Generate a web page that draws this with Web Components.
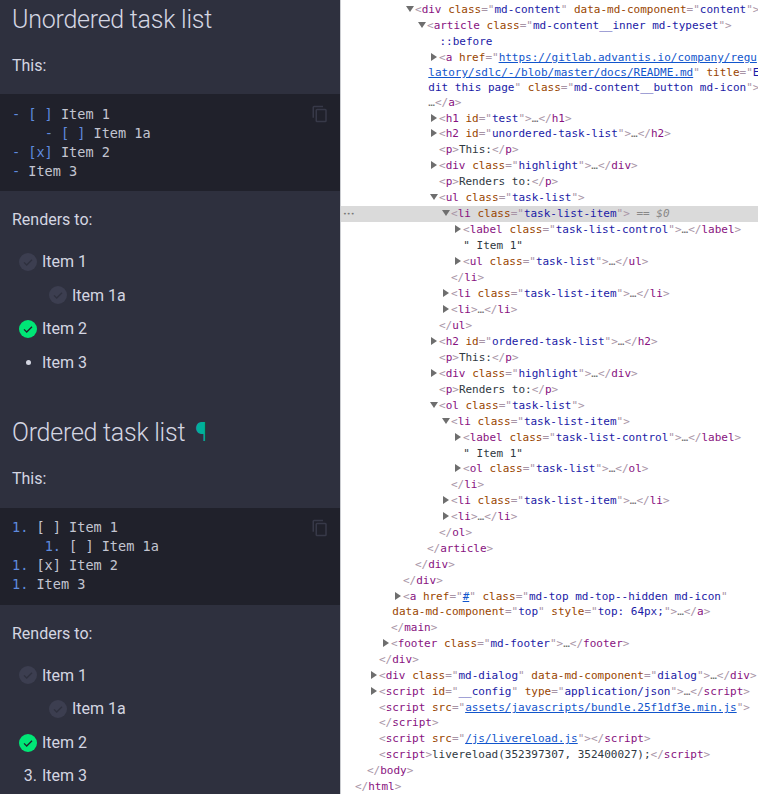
<!DOCTYPE html>
<html><head><meta charset="utf-8"><title>Task list</title>
<style>html,body{margin:0;padding:0;height:794px;overflow:hidden;background:#fff}</style>
</head><body>
<split-page>
<doc-pane slot="left">
<doc-h2>Unordered task list</doc-h2>
<doc-p>This:</doc-p>
<code-block>
<code-line><c-m>-</c-m> <c-m>[ ]</c-m> Item 1</code-line>
<code-line>    <c-m>-</c-m> <c-m>[ ]</c-m> Item 1a</code-line>
<code-line><c-m>-</c-m> <c-m>[x]</c-m> Item 2</code-line>
<code-line><c-m>-</c-m> Item 3</code-line>
</code-block>
<doc-p>Renders to:</doc-p>
<task-list>
<task-item kind="open">Item 1</task-item>
<task-item kind="open" nested>Item 1a</task-item>
<task-item kind="done">Item 2</task-item>
<task-item kind="bullet">Item 3</task-item>
</task-list>
<doc-h2 link>Ordered task list</doc-h2>
<doc-p>This:</doc-p>
<code-block>
<code-line><c-m>1.</c-m> [ ] Item 1</code-line>
<code-line>    <c-m>1.</c-m> [ ] Item 1a</code-line>
<code-line><c-m>1.</c-m> [x] Item 2</code-line>
<code-line><c-m>1.</c-m> Item 3</code-line>
</code-block>
<doc-p>Renders to:</doc-p>
<task-list>
<task-item kind="open">Item 1</task-item>
<task-item kind="open" nested>Item 1a</task-item>
<task-item kind="done">Item 2</task-item>
<task-item kind="num" n="3.">Item 3</task-item>
</task-list>
</doc-pane>
<dev-tree slot="right">
<dt-row l="5" t="d"><d-p>&lt;</d-p><d-n>div</d-n> <d-a>class</d-a><d-p>="</d-p><d-v>md-content</d-v><d-p>"</d-p> <d-a>data-md-component</d-a><d-p>="</d-p><d-v>content</d-v><d-p>"&gt;</d-p></dt-row>
<dt-row l="6" t="d"><d-p>&lt;</d-p><d-n>article</d-n> <d-a>class</d-a><d-p>="</d-p><d-v>md-content__inner md-typeset</d-v><d-p>"&gt;</d-p></dt-row>
<dt-row l="7" off="0.5"><d-v>::before</d-v></dt-row>
<dt-row l="7" t="r" h="15"><d-p>&lt;</d-p><d-n>a</d-n> <d-a>href</d-a><d-p>="</d-p><d-u>https://gitlab.advantis.io/company/regu</d-u></dt-row>
<dt-row l="6" off="1.3" h="15"><d-u>latory/sdlc/-/blob/master/docs/README.md</d-u><d-p>"</d-p> <d-a>title</d-a><d-p>="</d-p><d-v>E</d-v></dt-row>
<dt-row l="6" off="1.3" h="15"><d-v>dit this page</d-v><d-p>"</d-p> <d-a>class</d-a><d-p>="</d-p><d-v>md-content__button md-icon</d-v><d-p>"&gt;</d-p></dt-row>
<dt-row l="6" off="1.3"><d-x>…</d-x><d-p>&lt;/</d-p><d-n>a</d-n><d-p>&gt;</d-p></dt-row>
<dt-row l="7" t="r" h="15"><d-p>&lt;</d-p><d-n>h1</d-n> <d-a>id</d-a><d-p>="</d-p><d-v>test</d-v><d-p>"&gt;</d-p><d-x>…</d-x><d-p>&lt;/</d-p><d-n>h1</d-n><d-p>&gt;</d-p></dt-row>
<dt-row l="7" t="r"><d-p>&lt;</d-p><d-n>h2</d-n> <d-a>id</d-a><d-p>="</d-p><d-v>unordered-task-list</d-v><d-p>"&gt;</d-p><d-x>…</d-x><d-p>&lt;/</d-p><d-n>h2</d-n><d-p>&gt;</d-p></dt-row>
<dt-row l="7"><d-p>&lt;</d-p><d-n>p</d-n><d-p>&gt;</d-p>This:<d-p>&lt;/</d-p><d-n>p</d-n><d-p>&gt;</d-p></dt-row>
<dt-row l="7" t="r"><d-p>&lt;</d-p><d-n>div</d-n> <d-a>class</d-a><d-p>="</d-p><d-v>highlight</d-v><d-p>"&gt;</d-p><d-x>…</d-x><d-p>&lt;/</d-p><d-n>div</d-n><d-p>&gt;</d-p></dt-row>
<dt-row l="7"><d-p>&lt;</d-p><d-n>p</d-n><d-p>&gt;</d-p>Renders to:<d-p>&lt;/</d-p><d-n>p</d-n><d-p>&gt;</d-p></dt-row>
<dt-row l="7" t="d"><d-p>&lt;</d-p><d-n>ul</d-n> <d-a>class</d-a><d-p>="</d-p><d-v>task-list</d-v><d-p>"&gt;</d-p></dt-row>
<dt-row l="8" t="d" sel><d-p>&lt;</d-p><d-n>li</d-n> <d-a>class</d-a><d-p>="</d-p><d-v>task-list-item</d-v><d-p>"&gt;</d-p> <d-q>== $0</d-q></dt-row>
<dt-row l="9" t="r"><d-p>&lt;</d-p><d-n>label</d-n> <d-a>class</d-a><d-p>="</d-p><d-v>task-list-control</d-v><d-p>"&gt;</d-p><d-x>…</d-x><d-p>&lt;/</d-p><d-n>label</d-n><d-p>&gt;</d-p></dt-row>
<dt-row l="9" off="0.3">" Item 1"</dt-row>
<dt-row l="9" t="r"><d-p>&lt;</d-p><d-n>ul</d-n> <d-a>class</d-a><d-p>="</d-p><d-v>task-list</d-v><d-p>"&gt;</d-p><d-x>…</d-x><d-p>&lt;/</d-p><d-n>ul</d-n><d-p>&gt;</d-p></dt-row>
<dt-row l="8"><d-p>&lt;/</d-p><d-n>li</d-n><d-p>&gt;</d-p></dt-row>
<dt-row l="8" t="r"><d-p>&lt;</d-p><d-n>li</d-n> <d-a>class</d-a><d-p>="</d-p><d-v>task-list-item</d-v><d-p>"&gt;</d-p><d-x>…</d-x><d-p>&lt;/</d-p><d-n>li</d-n><d-p>&gt;</d-p></dt-row>
<dt-row l="8" t="r"><d-p>&lt;</d-p><d-n>li</d-n><d-p>&gt;</d-p><d-x>…</d-x><d-p>&lt;/</d-p><d-n>li</d-n><d-p>&gt;</d-p></dt-row>
<dt-row l="7"><d-p>&lt;/</d-p><d-n>ul</d-n><d-p>&gt;</d-p></dt-row>
<dt-row l="7" t="r"><d-p>&lt;</d-p><d-n>h2</d-n> <d-a>id</d-a><d-p>="</d-p><d-v>ordered-task-list</d-v><d-p>"&gt;</d-p><d-x>…</d-x><d-p>&lt;/</d-p><d-n>h2</d-n><d-p>&gt;</d-p></dt-row>
<dt-row l="7"><d-p>&lt;</d-p><d-n>p</d-n><d-p>&gt;</d-p>This:<d-p>&lt;/</d-p><d-n>p</d-n><d-p>&gt;</d-p></dt-row>
<dt-row l="7" t="r"><d-p>&lt;</d-p><d-n>div</d-n> <d-a>class</d-a><d-p>="</d-p><d-v>highlight</d-v><d-p>"&gt;</d-p><d-x>…</d-x><d-p>&lt;/</d-p><d-n>div</d-n><d-p>&gt;</d-p></dt-row>
<dt-row l="7"><d-p>&lt;</d-p><d-n>p</d-n><d-p>&gt;</d-p>Renders to:<d-p>&lt;/</d-p><d-n>p</d-n><d-p>&gt;</d-p></dt-row>
<dt-row l="7" t="d"><d-p>&lt;</d-p><d-n>ol</d-n> <d-a>class</d-a><d-p>="</d-p><d-v>task-list</d-v><d-p>"&gt;</d-p></dt-row>
<dt-row l="8" t="d"><d-p>&lt;</d-p><d-n>li</d-n> <d-a>class</d-a><d-p>="</d-p><d-v>task-list-item</d-v><d-p>"&gt;</d-p></dt-row>
<dt-row l="9" t="r"><d-p>&lt;</d-p><d-n>label</d-n> <d-a>class</d-a><d-p>="</d-p><d-v>task-list-control</d-v><d-p>"&gt;</d-p><d-x>…</d-x><d-p>&lt;/</d-p><d-n>label</d-n><d-p>&gt;</d-p></dt-row>
<dt-row l="9" off="0.3" h="15">" Item 1"</dt-row>
<dt-row l="9" t="r"><d-p>&lt;</d-p><d-n>ol</d-n> <d-a>class</d-a><d-p>="</d-p><d-v>task-list</d-v><d-p>"&gt;</d-p><d-x>…</d-x><d-p>&lt;/</d-p><d-n>ol</d-n><d-p>&gt;</d-p></dt-row>
<dt-row l="8"><d-p>&lt;/</d-p><d-n>li</d-n><d-p>&gt;</d-p></dt-row>
<dt-row l="8" t="r"><d-p>&lt;</d-p><d-n>li</d-n> <d-a>class</d-a><d-p>="</d-p><d-v>task-list-item</d-v><d-p>"&gt;</d-p><d-x>…</d-x><d-p>&lt;/</d-p><d-n>li</d-n><d-p>&gt;</d-p></dt-row>
<dt-row l="8" t="r"><d-p>&lt;</d-p><d-n>li</d-n><d-p>&gt;</d-p><d-x>…</d-x><d-p>&lt;/</d-p><d-n>li</d-n><d-p>&gt;</d-p></dt-row>
<dt-row l="7"><d-p>&lt;/</d-p><d-n>ol</d-n><d-p>&gt;</d-p></dt-row>
<dt-row l="6"><d-p>&lt;/</d-p><d-n>article</d-n><d-p>&gt;</d-p></dt-row>
<dt-row l="5"><d-p>&lt;/</d-p><d-n>div</d-n><d-p>&gt;</d-p></dt-row>
<dt-row l="4"><d-p>&lt;/</d-p><d-n>div</d-n><d-p>&gt;</d-p></dt-row>
<dt-row l="4" t="r" h="15"><d-p>&lt;</d-p><d-n>a</d-n> <d-a>href</d-a><d-p>="</d-p><d-u>#</d-u><d-p>"</d-p> <d-a>class</d-a><d-p>="</d-p><d-v>md-top md-top--hidden md-icon</d-v><d-p>"</d-p></dt-row>
<dt-row l="3" off="1.3"><d-a>data-md-component</d-a><d-p>="</d-p><d-v>top</d-v><d-p>"</d-p> <d-a>style</d-a><d-p>="</d-p><d-v>top: 64px;</d-v><d-p>"&gt;</d-p><d-x>…</d-x><d-p>&lt;/</d-p><d-n>a</d-n><d-p>&gt;</d-p></dt-row>
<dt-row l="3"><d-p>&lt;/</d-p><d-n>main</d-n><d-p>&gt;</d-p></dt-row>
<dt-row l="3" t="r"><d-p>&lt;</d-p><d-n>footer</d-n> <d-a>class</d-a><d-p>="</d-p><d-v>md-footer</d-v><d-p>"&gt;</d-p><d-x>…</d-x><d-p>&lt;/</d-p><d-n>footer</d-n><d-p>&gt;</d-p></dt-row>
<dt-row l="2"><d-p>&lt;/</d-p><d-n>div</d-n><d-p>&gt;</d-p></dt-row>
<dt-row l="2" t="r"><d-p>&lt;</d-p><d-n>div</d-n> <d-a>class</d-a><d-p>="</d-p><d-v>md-dialog</d-v><d-p>"</d-p> <d-a>data-md-component</d-a><d-p>="</d-p><d-v>dialog</d-v><d-p>"&gt;</d-p><d-x>…</d-x><d-p>&lt;/</d-p><d-n>div</d-n><d-p>&gt;</d-p></dt-row>
<dt-row l="2" t="r"><d-p>&lt;</d-p><d-n>script</d-n> <d-a>id</d-a><d-p>="</d-p><d-v>__config</d-v><d-p>"</d-p> <d-a>type</d-a><d-p>="</d-p><d-v>application/json</d-v><d-p>"&gt;</d-p><d-x>…</d-x><d-p>&lt;/</d-p><d-n>script</d-n><d-p>&gt;</d-p></dt-row>
<dt-row l="2" h="15"><d-p>&lt;</d-p><d-n>script</d-n> <d-a>src</d-a><d-p>="</d-p><d-u>assets/javascripts/bundle.25f1df3e.min.js</d-u><d-p>"&gt;</d-p></dt-row>
<dt-row l="2"><d-p>&lt;/</d-p><d-n>script</d-n><d-p>&gt;</d-p></dt-row>
<dt-row l="2"><d-p>&lt;</d-p><d-n>script</d-n> <d-a>src</d-a><d-p>="</d-p><d-u>/js/livereload.js</d-u><d-p>"&gt;&lt;/</d-p><d-n>script</d-n><d-p>&gt;</d-p></dt-row>
<dt-row l="2"><d-p>&lt;</d-p><d-n>script</d-n><d-p>&gt;</d-p>livereload(352397307, 352400027);<d-p>&lt;/</d-p><d-n>script</d-n><d-p>&gt;</d-p></dt-row>
<dt-row l="1"><d-p>&lt;/</d-p><d-n>body</d-n><d-p>&gt;</d-p></dt-row>
<dt-row l="0"><d-p>&lt;/</d-p><d-n>html</d-n><d-p>&gt;</d-p></dt-row>
</dev-tree>
</split-page>
<script>
function def(name, css, html, init){
  customElements.define(name, class extends HTMLElement{
    constructor(){super();const s=this.attachShadow({mode:'open'});s.innerHTML='<style>'+css+'</style>'+html;}
    connectedCallback(){ if(init) init(this, this.shadowRoot); }
  });
}
def('split-page',':host{display:grid;grid-template-columns:340px 1px 417px;width:758px;height:794px;overflow:hidden}.rule{background:#cbcdd1}','<slot name="left"></slot><div class="rule"></div><slot name="right"></slot>');
def('doc-pane',':host{display:block;height:794px;overflow:hidden;background:#2e303e;color:#d4d6e2;font:400 16px/25.6px Roboto,sans-serif;padding-top:1.85px;box-sizing:border-box}','<slot></slot>');
def('doc-h2',':host{display:block;font:300 25px/35px Roboto,sans-serif;letter-spacing:-.25px;color:#d4d6e2;padding:0 12px;margin:0 0 16px}:host([link]){margin-top:40px}.mark{color:#00b09b;margin-left:10px;display:none}:host([link]) .mark{display:inline}','<slot></slot><span class="mark">¶</span>');
def('doc-p',':host{display:block;padding:0 12px;margin:16px 0}','<slot></slot>');
def('code-block',':host{display:block;position:relative;background:#20212b;padding:10.4px 12px 10.6px;margin:16px 0;height:76px;color:#c3c5d1}svg{position:absolute;top:11px;right:11px;width:18px;height:18px;fill:#373948}','<slot></slot><svg viewBox="0 0 24 24"><path d="M19 21H8V7h11m0-2H8a2 2 0 0 0-2 2v14a2 2 0 0 0 2 2h11a2 2 0 0 0 2-2V7a2 2 0 0 0-2-2m-3-4H4a2 2 0 0 0-2 2v14h2V3h12V1z"/></svg>');
def('code-line',':host{display:block;font:400 13.55px/19px "DejaVu Sans Mono",monospace;white-space:pre;height:19px}','<slot></slot>');
def('c-m',':host{color:#5f8bde}','<slot></slot>');
def('task-list',':host{display:block;margin:16px 0}','<slot></slot>');
const CHECK='<svg viewBox="0 0 18 18" width="18" height="18"><circle cx="9" cy="9" r="9" class="c"/><path d="M5 9.4l2.7 2.6L13 6.7" fill="none" class="k" stroke-width="1.3"/></svg>';
def('task-item',':host{display:flex;align-items:center;height:25.6px;margin:8px 0 8px 19px;color:#d4d6e2}:host([nested]){margin-left:49px}.m{width:18px;height:18px;margin-right:5px;display:flex;align-items:center;justify-content:center;flex:none}:host([kind=num]) .m{justify-content:flex-end}.c{fill:#3c3e50}.k{stroke:#2e303e}:host([kind=done]) .c{fill:#00e676}:host([kind=done]) .k{stroke:#20212b}i{display:block;width:5px;height:5px;border-radius:50%;background:#d4d6e2}.n{white-space:nowrap}svg{display:block}',
 '<span class="m"></span><slot></slot>',(el,s)=>{
  const k=el.getAttribute('kind'),m=s.querySelector('.m');
  if(k==='open'||k==='done')m.innerHTML=CHECK;
  else if(k==='bullet')m.innerHTML='<i></i>';
  else m.innerHTML='<span class="n">'+el.getAttribute('n')+'</span>';
 });
def('dev-tree',':host{display:block;height:794px;overflow:hidden;background:#fff;color:#303942;font:11px/16px "DejaVu Sans Mono",monospace;padding-top:2px;box-sizing:border-box}','<slot></slot>');
def('dt-row',':host{display:block;position:relative;height:16px;white-space:pre;overflow:hidden}:host([h="15"]){height:15px}:host([sel]){background:#dadada}.tw{display:inline-block;width:0;height:0}.r{border-left:6px solid #6e6e6e;border-top:4px solid transparent;border-bottom:4px solid transparent;margin:0 2px}.d{border-top:6px solid #6e6e6e;border-left:4px solid transparent;border-right:4px solid transparent;margin:0 1px 1px}.dots{position:absolute;left:2px;top:0;color:#777;font:6.5px/16px "DejaVu Sans",sans-serif}',
 '<span class="dots" hidden>•••</span><span class="box"><span class="tw" hidden></span><slot></slot></span>',(el,s)=>{
  const l=+el.getAttribute('l')||0,t=el.getAttribute('t'),off=parseFloat(el.getAttribute('off')||0);
  el.style.paddingLeft=(14+l*12+off-(t?10:0))+'px';
  const tw=s.querySelector('.tw');
  if(t){tw.hidden=false;tw.classList.add(t);}
  if(el.hasAttribute('sel'))s.querySelector('.dots').hidden=false;
 });
def('d-p',':host{color:#a894a6}','<slot></slot>');
def('d-n',':host{color:#881280}','<slot></slot>');
def('d-a',':host{color:#994500}','<slot></slot>');
def('d-v',':host{color:#1a1aa6}','<slot></slot>');
def('d-u',':host{color:#1155cc;text-decoration:underline}','<slot></slot>');
def('d-x',':host{color:#6e6e6e}','<slot></slot>');
def('d-q',':host{color:#888;font-style:italic}','<slot></slot>');
</script>
</body></html>
